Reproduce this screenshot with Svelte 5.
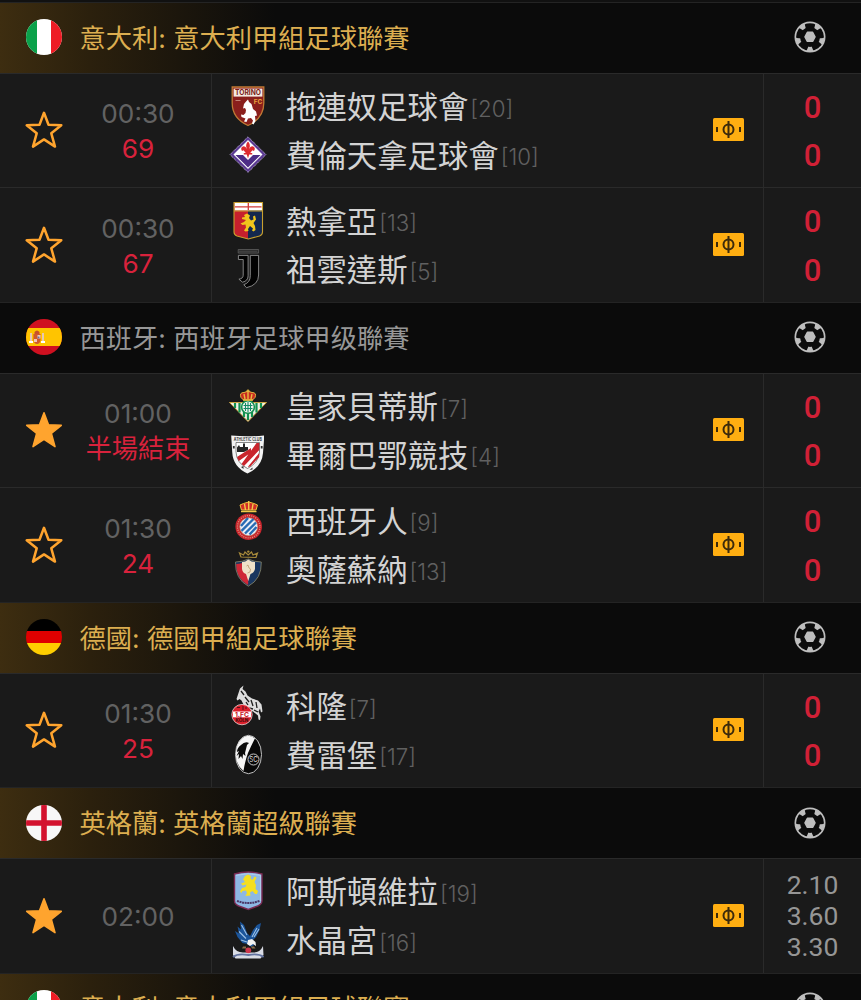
<script>
    const star =
        'M20 2.800 L24.500 14.700 L37.300 15.300 L27.300 23.300 L31 36.600 L20 29.400 L9 36.600 L12.700 23.300 L2.700 15.300 L15.500 14.700 Z';

    const leagues = [
        {
            flag: 'it',
            name: '意大利: 意大利甲組足球聯賽',
            gold: true,
            matches: [
                {
                    time: '00:30',
                    status: '69',
                    scores: ['0', '0'],
                    teams: [
                        { crest: 'torino', name: '拖連奴足球會', rank: 20 },
                        { crest: 'fiorentina', name: '費倫天拿足球會', rank: 10 }
                    ]
                },
                {
                    time: '00:30',
                    status: '67',
                    scores: ['0', '0'],
                    teams: [
                        { crest: 'genoa', name: '熱拿亞', rank: 13 },
                        { crest: 'juventus', name: '祖雲達斯', rank: 5 }
                    ]
                }
            ]
        },
        {
            flag: 'es',
            name: '西班牙: 西班牙足球甲级聯賽',
            gold: false,
            matches: [
                {
                    time: '01:00',
                    status: '半場結束',
                    starred: true,
                    scores: ['0', '0'],
                    teams: [
                        { crest: 'betis', name: '皇家貝蒂斯', rank: 7 },
                        { crest: 'bilbao', name: '畢爾巴鄂競技', rank: 4 }
                    ]
                },
                {
                    time: '01:30',
                    status: '24',
                    scores: ['0', '0'],
                    teams: [
                        { crest: 'espanyol', name: '西班牙人', rank: 9 },
                        { crest: 'osasuna', name: '奧薩蘇納', rank: 13 }
                    ]
                }
            ]
        },
        {
            flag: 'de',
            name: '德國: 德國甲組足球聯賽',
            gold: true,
            matches: [
                {
                    time: '01:30',
                    status: '25',
                    scores: ['0', '0'],
                    teams: [
                        { crest: 'koln', name: '科隆', rank: 7 },
                        { crest: 'freiburg', name: '費雷堡', rank: 17 }
                    ]
                }
            ]
        },
        {
            flag: 'en',
            name: '英格蘭: 英格蘭超級聯賽',
            gold: true,
            matches: [
                {
                    time: '02:00',
                    starred: true,
                    odds: ['2.10', '3.60', '3.30'],
                    teams: [
                        { crest: 'villa', name: '阿斯頓維拉', rank: 19 },
                        { crest: 'palace', name: '水晶宮', rank: 16 }
                    ]
                }
            ]
        },
        { flag: 'it', name: '意大利: 意大利甲組足球聯賽', gold: true, matches: [] }
    ];
</script>

{#snippet flagIcon(code)}
    <svg class="flag" viewBox="0 0 36 36">
        {#if code === 'it'}
            <path fill="#fff" d="M0 0h36v36H0z" />
            <path fill="#0ba14a" d="M0 0h11v36H0z" />
            <path fill="#ee1c25" d="M25 0h11v36H25z" />
        {:else if code === 'es'}
            <path fill="#cf1020" d="M0 0h36v36H0z" />
            <path fill="#ffc400" d="M0 9h36v18H0z" />
            <path fill="#e6c8b4" d="M4 14h2v8H4zM16 14h2v8h-2z" />
            <path fill="#c8502c" d="M8.500 13q2.500-3 5 0v2h-5z" />
            <path fill="#d0592c" d="M7.400 15h7.200v6q-.8 4-3.600 4t-3.600-4z" />
            <path fill="#f0c8b8" d="M11.500 16h3v3.600h-3zM8 20h3v3H8z" />
            <circle fill="#6675a8" cx="12.500" cy="18.500" r="1" />
            <path fill="#fff" d="M3 22h4v2H3zM15 22h4v2h-4z" />
        {:else if code === 'de'}
            <path fill="#000" d="M0 0h36v12H0z" />
            <path fill="#e00000" d="M0 12h36v12H0z" />
            <path fill="#ffce00" d="M0 24h36v12H0z" />
        {:else}
            <path fill="#f7f7f7" d="M0 0h36v36H0z" />
            <path fill="#d3122e" d="M15.200 0h5.600v36h-5.600zM0 15.200h36v5.600H0z" />
        {/if}
    </svg>
{/snippet}

{#snippet crestIcon(name)}
    <svg class="crest" viewBox="0 0 40 42">
        {#if name === 'torino'}
            <path fill="#8a1f1c" stroke="#c07a35" stroke-width="1.300" d="M4.200 2h31.600v16c0 12-7 18.500-15.800 22.500C11.200 36.500 4.200 30 4.200 18z" />
            <path fill="#f3e9e0" d="M5.600 3.600h28.800v8H5.600z" />
            <text x="20" y="10.200" font-size="7" font-weight="700" text-anchor="middle" textLength="26" lengthAdjust="spacingAndGlyphs" fill="#7b1d18">TORINO</text>
            <text x="30" y="19" font-size="6.500" font-weight="700" text-anchor="middle" fill="#e8a23c">FC</text>
            <path fill="#fff" d="M16 19l2.500-3 1.500-1.400 1 2.400 2.500 2 1.500 5 3 2.500 1 4-2 .5.500 5-2 3.500-1.500-1 1-3-2-2.500-3 .5-1.500 3.500-2.500-.5 1.500-3-4-1.500-.5-2.500 2.500.5 2-2 .5-3-1-2-2 .500z" />
            <path stroke="#d09a8c" stroke-width=".8" d="M7.500 15.500h5" />
        {:else if name === 'fiorentina'}
            <path fill="#5b3a93" stroke="#b5a6cc" stroke-width="1" stroke-dasharray="1 .5" d="M20 2.800L38 20.600 20 38.400 2 20.600z" />
            <path fill="#fff" d="M20 6l14.500 14.500L20 35 5.500 20.500z" />
            <path fill="#4c2c86" d="M7.500 21l7.500 0 5 5 5-5h7.500L20 33.500z" />
            <path fill="#dd2a30" d="M20 7.500q3 3 1.200 7.500 1.300-3.500 4-2.500 2.800 1.500.8 4.500l-1.600-.8-2.200 2.800h2v1.400h-3L20 24.500l-1.200-4.100h-3V19h2l-2.200-2.800-1.600.8q-2-3 .8-4.500 2.700-1 4 2.500-1.800-4.500 1.200-7.500z" />
        {:else if name === 'genoa'}
            <path fill="#c6202d" d="M6 2.500h14V39l-11-3q-3-1-3-4z" />
            <path fill="#14284e" d="M20 2.500h14.500V32q0 3-3 4L20 39z" />
            <path fill="#fff" d="M6.500 3h27.500v7.500H6.500z" />
            <path stroke="#d13b39" stroke-width="1.300" d="M7 6.800h26.500M20.300 3v7" />
            <path fill="none" stroke="#c8a02f" stroke-width="1.100" d="M6 2.500h28.500V32q0 3-3 4L20.300 39 9 36q-3-1-3-4zM6 11h28.500" />
            <path fill="#f0c51c" d="M16 15l3-1.500 3 2-1 2.500 2 2.500 2.500-1-.5-3 2-1 1 4-2.500 3.500 1.500 3 .5 4-2 1.500-1.500-1 1-2-3-2.500-2 3 .5 2-3 .5-1.500-1 2-3-.5-3-3 .5-2-1.500 3.500-1.500 2-2-4-1 0-1.500 3-.5z" />
        {:else if name === 'juventus'}
            <path fill="#2c2c2c" stroke="#666" stroke-width=".7" d="M10.200 1.500h20.400v3.600H10.200z" />
            <path fill="none" stroke="#8f8f8f" stroke-width=".5" stroke-dasharray="1 1" d="M11.500 3.300h18" />
            <path fill="#020202" stroke="#929292" stroke-width=".9" d="M10.400 7.400h9.700v20.500q0 5-5.600 6.300l-3.600-3q4.300-.6 4.300-4V11.500h-4.800z" />
            <path fill="#020202" stroke="#929292" stroke-width=".9" d="M22.300 7.400h8.300V27q0 10-12.100 12.700l-2.700-3q6.500-2 6.500-9z" />
        {:else if name === 'betis'}
            <path fill="#f0f0e6" stroke="#c9a342" stroke-width="1" d="M1.500 17.500h37L20 36.500z" />
            <path stroke="#129150" stroke-width="2.200" d="M7 18v5M11.500 18v9.500M16 18v14M20 18v17M24 18v14M28.500 18v9.500M33 18v5" />
            <circle fill="#f2f6ef" stroke="#129150" stroke-width="1.600" cx="20" cy="22" r="6.400" />
            <path fill="none" stroke="#148b66" stroke-width="1.100" d="M17.500 18v8M20 17v10M22.500 18v8M15.500 20.500h9M15.500 23.500h9" />
            <path fill="#c92b20" stroke="#e1b540" stroke-width="1" d="M13 12.500q-2-5 3-5 4-2.500 8 0 5 0 3 5l-2.500 2.500h-9z" />
            <path stroke="#e8b93f" stroke-width="1.400" d="M15 15h10M20 4.500V14M18.500 6h3M16 9l1 5M24 9l-1 5" />
        {:else if name === 'bilbao'}
            <path fill="#f3f3f3" d="M3.200 1.500q16.500 1.500 32.800 0V6l-1 13q-1 14-15.500 20.500Q5 33 4.200 18z" />
            <path fill="#fff" stroke="#555" stroke-width=".7" d="M8 8.500h23.500V18q-1 11-12 16.500Q8.500 29 8 18z" />
            <path fill="#c9252d" d="M28.500 9h2.800v7L16 32l-2.500-2zM23 14v4.500L10.800 27 9 23zM31.200 19v4l-9 9.500-2.500.5z" />
            <path fill="#252525" d="M9 13.500l2-2.500 1 2h3V9.500h2v3.500h3v3l-4 2H9z" />
            <text x="19.800" y="7" font-size="4.600" font-weight="700" text-anchor="middle" textLength="28" lengthAdjust="spacingAndGlyphs" fill="#333">ATHLETIC CLUB</text>
            <path fill="#333" d="M4.900 12h1.800v2.500H4.900zM32.800 12h1.800v2.500h-1.800zM13 33l2.500-1v3zM21.500 36l3-2.500v2z" />
        {:else if name === 'espanyol'}
            <path fill="#d12f27" stroke="#edc33d" stroke-width="1" d="M13.500 10L12 5l3.500-1.500L20.700 2 26 3.500 29.500 5 28 10z" />
            <path stroke="#f2cb49" stroke-width="1.400" d="M13 11.500h15.500M20.700 1v9M16.500 4l1 6M25 4l-1 6" />
            <circle fill="#c9252d" cx="20.700" cy="26.700" r="13.300" />
            <circle fill="none" stroke="#dd9a80" stroke-width="1.300" stroke-dasharray="1 1.200" cx="20.700" cy="26.700" r="11.200" />
            <circle fill="#e9edf6" stroke="#b88668" stroke-width=".6" cx="20.700" cy="26.700" r="9" />
            <path stroke="#276bb3" stroke-width="2.400" d="M13 26l7-8M13.500 30.800L25.500 19M17 33.500l11-11M21.500 34.500l7-7.500" />
        {:else if name === 'osasuna'}
            <path fill="none" stroke="#a88b3b" stroke-width="1.200" d="M13 9L11.500 5l4 2 1.500-3 3.200 3L23.500 4 25 7l4.500-2L28 9.500z" />
            <circle fill="#a88b3b" cx="20.300" cy="3.600" r="1.200" />
            <path fill="#19365f" stroke="#7e7e67" stroke-width=".9" d="M7.500 14q7 0 12.800-3 6 3 13 3 .5 17-13 24.200Q7 31 7.500 14z" />
            <path fill="#cf2836" d="M8.200 16q3 0 6-1l6 10V37Q8.500 31 8.200 16z" />
            <path fill="#efe2c8" d="M14 14q3.500 0 6.300-2.500Q23.500 14 27 14v7q-1 4-4.500 5L20.300 33 18 26q-3.500-1-4-5z" />
            <path fill="none" stroke="#b48f60" stroke-width=".7" d="M18.500 18l1.500-1 1 3 1.500 1-.5 3-2.500 1" />
        {:else if name === 'koln'}
            <path fill="#dedede" d="M12 3.500L15.500.5 14.500 4l3 2.500 2 4 4.500 3 6 2 3.500 4 1 7-1.500 1-1-4-1.500 3 2 5-.5 3.500-1.500-.5-.5-4-5-4-5-2-4-4-2.500-5-2-1.500-2 1.500-1-1.500z" />
            <path stroke="#1f1f1f" stroke-width="1.300" fill="none" d="M13 6l3 4M17 12l4 5M23 15l2 6M28 17l1 6M20 20l-2-3M26 25l4 2M21 23l4 1" />
            <circle fill="#db1e2a" stroke="#f4d4d4" stroke-width=".8" cx="14" cy="29.600" r="10.200" />
            <path fill="#fff" d="M5 26.500h18v5.800H5z" />
            <text x="14" y="31.800" font-size="6.800" font-weight="700" text-anchor="middle" fill="#c8202b">1.FC</text>
            <text x="14" y="37" font-size="4.600" font-weight="700" text-anchor="middle" fill="#400c0c">KÖLN</text>
            <path stroke="#54101a" stroke-width="1" d="M9 22.500h3M15 21v4M18 22v2" />
        {:else if name === 'freiburg'}
            <ellipse fill="#080808" stroke="#c4c4c4" stroke-width="1" cx="20.500" cy="20.500" rx="13" ry="19.200" />
            <path fill="#f5f5f5" d="M27 4.200Q23 12 20 19q-3 8-4.500 18Q8 31 7.800 20.500 8 9 15 3.500 21-.5 27 4.200z" />
            <path fill="#0b0b0b" d="M13 11q4-4 8-2l-2 2-1 4-1 4 .5 3-2.500-2-.5 5-1.500-3-2.500 3 .5-5-2.500 2 2.500-5-2 1q0-4 4-7z" />
            <circle fill="none" stroke="#ddd" stroke-width=".9" cx="25.500" cy="25.500" r="5.500" />
            <text x="25.500" y="28.300" font-size="7.500" text-anchor="middle" textLength="8.500" lengthAdjust="spacingAndGlyphs" fill="#ddd">SC</text>
        {:else if name === 'villa'}
            <path fill="#8db8e4" stroke="#7b2a52" stroke-width="1.400" d="M6.500 4q7-2 13.800-2 7 0 13.700 2v27q0 4-7 6l-6.700 2.500L13.500 37q-7-2-7-6z" />
            <path fill="none" stroke="#b7d2ee" stroke-width=".8" d="M8 5.300q12-3 24.500 0V31" />
            <path fill="#f5df20" d="M17 6l3-1.500 3 1.500-.5 2.500 2 1.500 2-3.500 2 1-2 4.500 1.500 3-.5 4 2.500 2-1 3h-2l-2.500-3-2.500 1.500.5 3-5 .5 1.500-3-1-2.500-3.500.5-1 2-1.500-1.500 2-3.500 3.500-1 1-2.500-4 1-1.500-2 4-1.500-2-2.500z" />
            <path fill="none" stroke="#4a3767" stroke-width="2" stroke-dasharray="2 .6" d="M9 31q11 4 22.500 0" />
        {:else}
            <path fill="#d9dce5" d="M5 27q3 6.500 10 6.500h11q6 0 9-6.500l.5 9-3 3.500H7.500L5 36z" />
            <path fill="none" stroke="#6272a0" stroke-width="1.800" d="M5 38q5-4 15.300-2 10-2 15.300 2" />
            <path fill="#1b559b" d="M12 2.500l4 3.500 3 8 3 3 3-6 4-5 4-2-1.500 7-3.500 7-4 4 2 4-2.500 2-4-3-5-1-5-6-2.500-6 4 2.500-1.500-7 3.500 3z" />
            <path fill="none" stroke="#9ec2e6" stroke-width="1.100" d="M13.500 6l5.500 10M11 12.500l7 7M29 9l-5 9M31 10l-5 8M13 21l6 2" />
            <path fill="#f3f3f3" d="M20 21l4-1 3.500 3 .5 4-3-2-3 2-3-2z" />
            <path fill="#8b6f4a" d="M15 27.500h3v2h-4zM23 27.500h3l1.500 2H24z" />
            <circle fill="#d0364c" cx="20.300" cy="31.300" r="2.900" />
        {/if}
    </svg>
{/snippet}

<div class="board">
    {#each leagues as league}
        <section>
            <header class="league" class:gold={league.gold}>
                {@render flagIcon(league.flag)}
                <span class="league-name">{league.name}</span>
                <svg class="ball" viewBox="0 0 32 32">
                    <circle fill="#bebebe" cx="16" cy="16" r="15.500" />
                    <circle fill="#0c0c0c" cx="16" cy="16" r="10" />
                    <!-- dark panels on the rim -->
                    {#each [0, 72, 144, 216, 288] as angle}
                        <path
                            fill="#0c0c0c"
                            transform="rotate({angle} 16 16)"
                            d="M10.800 3.400q1.400-1 2.800-.9 2.400-.6 4.800 0 1.400-.1 2.800.9L19.800 9h-7.600z"
                        />
                    {/each}
                    <path
                        fill="#bebebe"
                        stroke="#bebebe"
                        stroke-width="1.500"
                        stroke-linejoin="round"
                        d="M13.400 11.300h5.200l2.400 4.500-2.400 4.500h-5.200L11 15.800z"
                    />
                </svg>
            </header>
            {#each league.matches as match}
                <div class="match">
                    <div class="info">
                        <svg class="star" class:starred={match.starred} viewBox="0 0 40 40">
                            <path d={star} />
                        </svg>
                        <div class="when">
                            <div class="time">{match.time}</div>
                            {#if match.status}
                                <div class="status">{match.status}</div>
                            {/if}
                        </div>
                    </div>
                    <div class="teams">
                        {#each match.teams as team}
                            <div class="team">
                                {@render crestIcon(team.crest)}
                                <span class="team-name">{team.name}</span>
                                <span class="rank">[{team.rank}]</span>
                            </div>
                        {/each}
                    </div>
                    <svg class="pitch" viewBox="0 0 31 23">
                        <rect fill="#ffae11" width="31" height="23" rx="1.500" />
                        <g fill="none" stroke="#3d2a0b" stroke-width="2">
                            <circle cx="15.500" cy="11.500" r="5" />
                            <path d="M15.500 3v17M4 9v5M27 9v5" />
                        </g>
                    </svg>
                    <div class="result">
                        {#if match.odds}
                            {#each match.odds as odd}
                                <div class="odd">{odd}</div>
                            {/each}
                        {:else}
                            {#each match.scores as score}
                                <div class="score">{score}</div>
                            {/each}
                        {/if}
                    </div>
                </div>
            {/each}
        </section>
    {/each}
</div>

<style>
    :global(body) {
        background: #0c0c0c;
    }
    .board {
        box-sizing: border-box;
        height: 1000px;
        padding-top: 2px;
        overflow: hidden;
        background: #111;
        font-family: Inter, 'Noto Sans CJK TC', sans-serif;
    }
    .league {
        display: flex;
        align-items: center;
        box-sizing: border-box;
        height: 70.67px;
        padding: 0 35px 1px 26px;
        border-top: 1px solid #242424;
        background: #0b0b0b;
        color: #979797;
    }
    .league.gold {
        background: linear-gradient(to right, #3d2d10 0, #2b200d 90px, #0b0b0b 275px);
        color: #dcae50;
    }
    .flag {
        width: 36px;
        height: 36px;
        border-radius: 50%;
    }
    .league-name {
        flex: 1;
        margin-left: 17.5px;
        padding-top: 3px;
        font-size: 26.25px;
        line-height: 36px;
        white-space: pre;
    }
    .ball {
        width: 32px;
        height: 32px;
    }
    .match {
        display: flex;
        align-items: center;
        box-sizing: border-box;
        height: 114.66px;
        border-top: 1px solid #2a2a2a;
        background: #1a1a1a;
    }
    .info {
        display: flex;
        align-items: center;
        box-sizing: border-box;
        width: 212px;
        height: 100%;
        padding-left: 24px;
        border-right: 1px solid #2a2a2a;
    }
    .star {
        width: 40px;
        height: 40px;
        fill: none;
        stroke: #ffa42e;
        stroke-width: 2.5;
        stroke-linejoin: round;
    }
    .star.starred {
        fill: #ffa42e;
        stroke-width: 1.6;
    }
    .when {
        flex: 1;
        margin-right: -1px;
        padding-top: 1px;
        font-size: 26.2px;
        line-height: 35px;
        text-align: center;
    }
    .time {
        color: #626262;
    }
    .status {
        color: #d8223c;
    }
    .teams {
        flex: 1;
        padding-left: 16px;
    }
    .team {
        display: flex;
        align-items: center;
        height: 48.7px;
    }
    .crest {
        width: 40px;
        height: 42px;
        overflow: visible;
    }
    .team-name {
        margin-left: 18px;
        padding-top: 2px;
        color: #d3d3d3;
        font-size: 30.4px;
        line-height: 44px;
    }
    .rank {
        margin: 4px 0 0 2px;
        color: #606060;
        font-size: 22.3px;
        font-weight: 300;
    }
    .pitch {
        width: 31px;
        height: 23px;
        margin: 0 19px 1px 0;
    }
    .result {
        display: flex;
        flex-direction: column;
        justify-content: center;
        box-sizing: border-box;
        width: 98px;
        height: 100%;
        border-left: 1px solid #2a2a2a;
        font-family: Roboto, sans-serif;
        text-align: center;
    }
    .score {
        padding-top: 3px;
        color: #d12036;
        font-size: 31px;
        font-weight: 500;
        line-height: 45.7px;
    }
    .odd {
        color: #969696;
        font-size: 26.5px;
        line-height: 31px;
    }
</style>
